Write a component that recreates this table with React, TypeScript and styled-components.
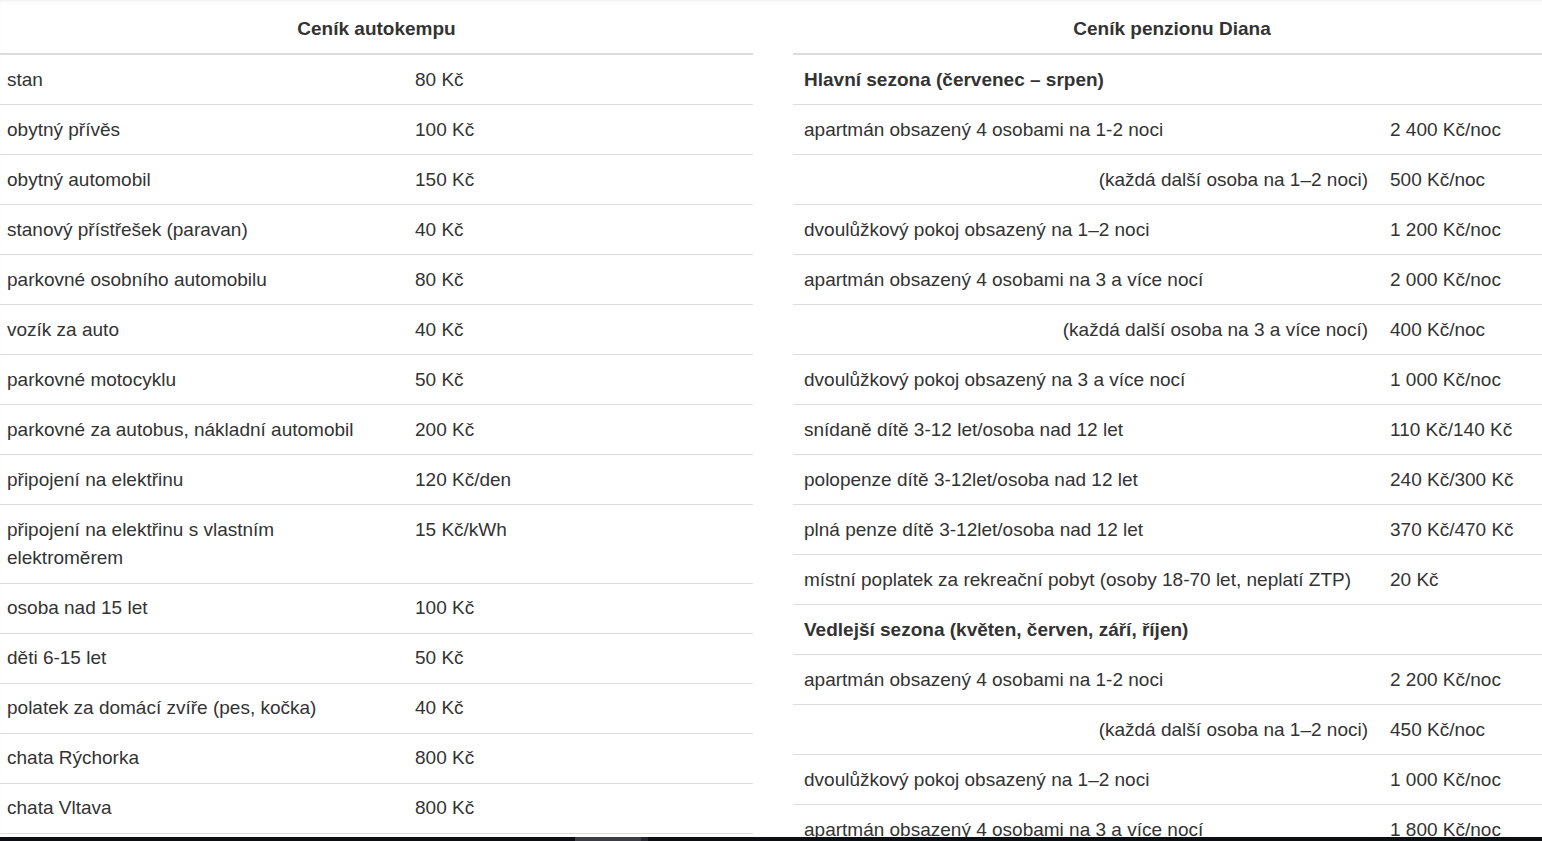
import React from "react";
import styled, { createGlobalStyle } from "styled-components";

interface PriceRow {
  label?: string;
  price?: string;
  section?: boolean;
  note?: boolean;
  twoLines?: [string, string];
}

const campRows: PriceRow[] = [
  { label: "stan", price: "80 Kč" },
  { label: "obytný přívěs", price: "100 Kč" },
  { label: "obytný automobil", price: "150 Kč" },
  { label: "stanový přístřešek (paravan)", price: "40 Kč" },
  { label: "parkovné osobního automobilu", price: "80 Kč" },
  { label: "vozík za auto", price: "40 Kč" },
  { label: "parkovné motocyklu", price: "50 Kč" },
  { label: "parkovné za autobus, nákladní automobil", price: "200 Kč" },
  { label: "připojení na elektřinu", price: "120 Kč/den" },
  {
    twoLines: ["připojení na elektřinu s vlastním", "elektroměrem"],
    price: "15 Kč/kWh",
  },
  { label: "osoba nad 15 let", price: "100 Kč" },
  { label: "děti 6-15 let", price: "50 Kč" },
  { label: "polatek za domácí zvíře (pes, kočka)", price: "40 Kč" },
  { label: "chata Rýchorka", price: "800 Kč" },
  { label: "chata Vltava", price: "800 Kč" },
];

const pensionRows: PriceRow[] = [
  { label: "Hlavní sezona (červenec – srpen)", section: true },
  { label: "apartmán obsazený 4 osobami na 1-2 noci", price: "2 400 Kč/noc" },
  { label: "(každá další osoba na 1–2 noci)", price: "500 Kč/noc", note: true },
  { label: "dvoulůžkový pokoj obsazený na 1–2 noci", price: "1 200 Kč/noc" },
  { label: "apartmán obsazený 4 osobami na 3 a více nocí", price: "2 000 Kč/noc" },
  { label: "(každá další osoba na 3 a více nocí)", price: "400 Kč/noc", note: true },
  { label: "dvoulůžkový pokoj obsazený na 3 a více nocí", price: "1 000 Kč/noc" },
  { label: "snídaně dítě 3-12 let/osoba nad 12 let", price: "110 Kč/140 Kč" },
  { label: "polopenze dítě 3-12let/osoba nad 12 let", price: "240 Kč/300 Kč" },
  { label: "plná penze dítě 3-12let/osoba nad 12 let", price: "370 Kč/470 Kč" },
  {
    label: "místní poplatek za rekreační pobyt (osoby 18-70 let, neplatí ZTP)",
    price: "20 Kč",
  },
  { label: "Vedlejší sezona (květen, červen, září, říjen)", section: true },
  { label: "apartmán obsazený 4 osobami na 1-2 noci", price: "2 200 Kč/noc" },
  { label: "(každá další osoba na 1–2 noci)", price: "450 Kč/noc", note: true },
  { label: "dvoulůžkový pokoj obsazený na 1–2 noci", price: "1 000 Kč/noc" },
  { label: "apartmán obsazený 4 osobami na 3 a více nocí", price: "1 800 Kč/noc" },
];

const PriceTable = ({
  title,
  rows,
  labelWidth,
  pad,
}: {
  title: string;
  rows: PriceRow[];
  labelWidth: number;
  pad: number;
}) => (
  <Table $pad={pad}>
    <colgroup>
      <col style={{ width: labelWidth }} />
      <col />
    </colgroup>
    <thead>
      <tr>
        <HeadCell colSpan={2}>{title}</HeadCell>
      </tr>
    </thead>
    <tbody>
      {rows.map((row, i) =>
        row.section ? (
          <tr key={i}>
            <SectionCell colSpan={2}>{row.label}</SectionCell>
          </tr>
        ) : (
          <tr key={i}>
            <Cell $right={row.note}>
              {row.twoLines ? (
                <>
                  {row.twoLines[0]}
                  <br />
                  {row.twoLines[1]}
                </>
              ) : (
                row.label
              )}
            </Cell>
            <Cell>{row.price}</Cell>
          </tr>
        )
      )}
    </tbody>
  </Table>
);

export default function App() {
  return (
    <>
      <GlobalStyle />
      <Page>
        <PriceTable
          title="Ceník autokempu"
          rows={campRows}
          labelWidth={408}
          pad={7}
        />
        <PriceTable
          title="Ceník penzionu Diana"
          rows={pensionRows}
          labelWidth={586}
          pad={11}
        />
      </Page>
      <BottomBar>
        <BarThumb />
        <BarNotch />
      </BottomBar>
    </>
  );
}

const GlobalStyle = createGlobalStyle`
  html, body {
    margin: 0;
    background: #fff;
    overflow-x: hidden;
  }
  body {
    font-family: "Liberation Sans", Arial, sans-serif;
    color: #333;
  }
`;

const Page = styled.div`
  display: grid;
  grid-template-columns: 753px 758px;
  column-gap: 40px;
  align-items: start;
  width: 1551px;
  box-shadow: inset 0 2px 3px -1px rgba(0, 0, 0, 0.07);
`;

const Table = styled.table<{ $pad: number }>`
  width: 100%;
  border-collapse: collapse;
  border-spacing: 0;
  table-layout: fixed;
  font-size: 19px;
  line-height: 28.5px;

  th,
  td {
    padding-left: ${(p) => p.$pad}px;
    padding-right: ${(p) => p.$pad}px;
  }
`;

const HeadCell = styled.th`
  padding-top: 15px;
  padding-bottom: 9.5px;
  font-weight: bold;
  text-align: center;
  border-bottom: 2px solid #ddd;
`;

const Cell = styled.td<{ $right?: boolean }>`
  padding-top: 10.75px;
  padding-bottom: 9.75px;
  vertical-align: top;
  text-align: ${(p) => (p.$right ? "right" : "left")};
  border-bottom: 1px solid #ddd;
`;

const SectionCell = styled(Cell)`
  font-weight: bold;
`;

const BottomBar = styled.div`
  position: fixed;
  left: 0;
  right: 0;
  bottom: 0;
  height: 4px;
  background: #0b0f14;
  display: flex;
  padding-left: 575px;
`;

const BarThumb = styled.div`
  width: 66px;
  background: #3a3d44;
`;

const BarNotch = styled.div`
  width: 7px;
  background: #24272d;
`;
